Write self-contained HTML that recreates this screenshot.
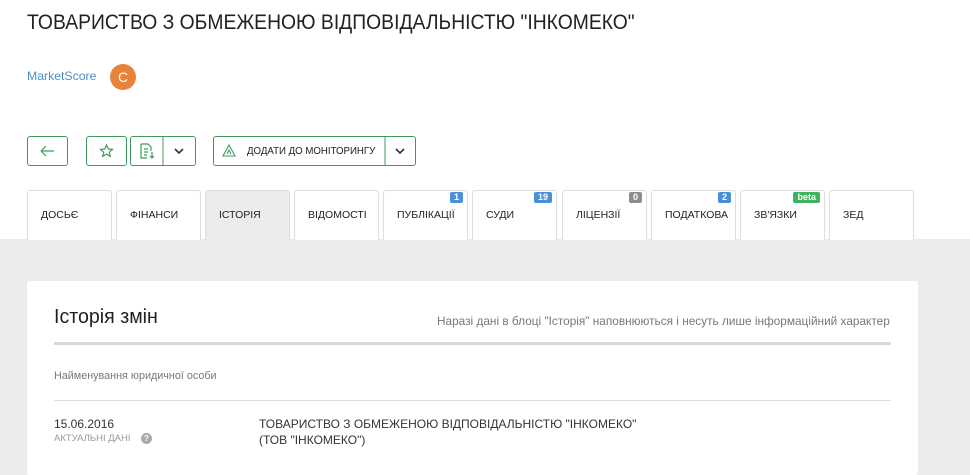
<!DOCTYPE html><html><head><meta charset="utf-8"><style>
body{margin:0;width:970px;height:475px;overflow:hidden;background:#fff;font-family:"Liberation Sans",sans-serif;position:relative}
.a{position:absolute}
.t{white-space:nowrap;transform-origin:0 0}
.btn{position:absolute;top:136px;height:30px;border:1px solid #3f9b5d;border-radius:3px;box-sizing:border-box}
.tab{position:absolute;top:190px;width:85px;height:50px;border:1px solid #ddd;border-bottom:none;border-radius:3px 3px 0 0;background:#fff;box-sizing:border-box;font-size:10.5px;color:#222}
.tab span{position:absolute;left:13px;top:18px}
.b{position:absolute;top:1px;right:4px;height:11px;line-height:11px;padding:0 4px;font-size:9px;color:#fff;border-radius:2px;font-weight:bold}
</style></head><body>
<div class="a t" style="left:27px;top:11px;font-size:21px;color:#222;transform:scaleX(0.92)">ТОВАРИСТВО З ОБМЕЖЕНОЮ ВІДПОВІДАЛЬНІСТЮ "ІНКОМЕКО"</div>
<div class="a t" style="left:27px;top:69px;font-size:12px;color:#4a8fc7;transform:scaleX(1.02)">MarketScore</div>
<div class="a" style="left:110px;top:64px;width:26px;height:26px;border-radius:50%;background:#e8833a;color:#fff;font-size:14px;text-align:center;line-height:26px">C</div>

<div class="btn" style="left:27px;width:41px"><svg width="39" height="28"><path d="M13 14h13M13 14l5-5M13 14l5 5" stroke="#3f9b5d" fill="none" stroke-width="1.2"/></svg></div>
<div class="btn" style="left:86px;width:41px"><svg width="39" height="28"><path d="M19.5 8l1.8 4 4.2.4-3.2 2.8 1 4.2-3.8-2.3-3.8 2.3 1-4.2-3.2-2.8 4.2-.4z" stroke="#3f9b5d" fill="none" stroke-width="1.2"/></svg></div>
<div class="btn" style="left:130px;width:66px"><svg width="64" height="28"><path d="M10 7h7l3 3v4M10 7v14h6M13 12h4M13 15h4M13 18h3M21 15v6M19 19l2 2 2-2" stroke="#3f9b5d" fill="none" stroke-width="1.2"/><path d="M32 0v28" stroke="#3f9b5d"/><path d="M44 12l4 4 4-4" stroke="#333" fill="none" stroke-width="1.6"/></svg></div>
<div class="btn" style="left:213px;width:203px"><svg width="201" height="28" class="a" style="left:0;top:0"><path d="M15 8l6 11H9z M13 17l2-4 2 4" stroke="#3f9b5d" fill="none" stroke-width="1.1"/><path d="M171 0v28" stroke="#3f9b5d"/><path d="M182 12l4 4 4-4" stroke="#333" fill="none" stroke-width="1.6"/></svg><span class="a t" style="left:33px;top:8px;font-size:10.5px;color:#222;transform:scaleX(0.92)">ДОДАТИ ДО МОНІТОРИНГУ</span></div>

<div class="a" style="left:0;top:239px;width:970px;height:236px;background:#ececec"></div>
<div class="tab" style="left:27px"><span>ДОСЬЄ</span></div>
<div class="tab" style="left:116px"><span>ФІНАНСИ</span></div>
<div class="tab" style="left:205px;background:#ececec"><span>ІСТОРІЯ</span></div>
<div class="tab" style="left:294px"><span>ВІДОМОСТІ</span></div>
<div class="tab" style="left:383px"><span>ПУБЛІКАЦІЇ</span><div class="b" style="background:#4a90d9">1</div></div>
<div class="tab" style="left:472px"><span>СУДИ</span><div class="b" style="background:#4a90d9">19</div></div>
<div class="tab" style="left:562px"><span>ЛІЦЕНЗІЇ</span><div class="b" style="background:#8c8c8c">0</div></div>
<div class="tab" style="left:651px"><span>ПОДАТКОВА</span><div class="b" style="background:#4a90d9">2</div></div>
<div class="tab" style="left:740px"><span>ЗВ'ЯЗКИ</span><div class="b" style="background:#3fb35f">beta</div></div>
<div class="tab" style="left:829px"><span>ЗЕД</span></div>

<div class="a" style="left:27px;top:281px;width:891px;height:194px;background:#fff;border-radius:3px"></div>
<div class="a t" style="left:54px;top:306px;font-size:20px;color:#222;transform:scaleX(0.98)">Історія змін</div>
<div class="a t" style="left:437px;top:314px;font-size:12px;color:#777;transform:scaleX(0.985)">Наразі дані в блоці "Історія" наповнюються і несуть лише інформаційний характер</div>
<div class="a" style="left:54px;top:342px;width:837px;height:3px;background:#d8d8d8"></div>
<div class="a t" style="left:54px;top:370px;font-size:11px;color:#777;transform:scaleX(0.98)">Найменування юридичної особи</div>
<div class="a" style="left:54px;top:400px;width:837px;height:1px;background:#ddd"></div>
<div class="a t" style="left:54px;top:417px;font-size:12px;color:#333">15.06.2016</div>
<div class="a t" style="left:54px;top:433px;font-size:9.5px;color:#999">АКТУАЛЬНІ ДАНІ</div>
<div class="a" style="left:141px;top:433px;width:11px;height:11px;border-radius:50%;background:#aaa;color:#fff;font-size:8px;text-align:center;line-height:11px;font-weight:bold">?</div>
<div class="a t" style="left:259px;top:417px;font-size:12px;color:#333">ТОВАРИСТВО З ОБМЕЖЕНОЮ ВІДПОВІДАЛЬНІСТЮ "ІНКОМЕКО"</div>
<div class="a t" style="left:259px;top:433px;font-size:12px;color:#333">(ТОВ "ІНКОМЕКО")</div>
</body></html>
